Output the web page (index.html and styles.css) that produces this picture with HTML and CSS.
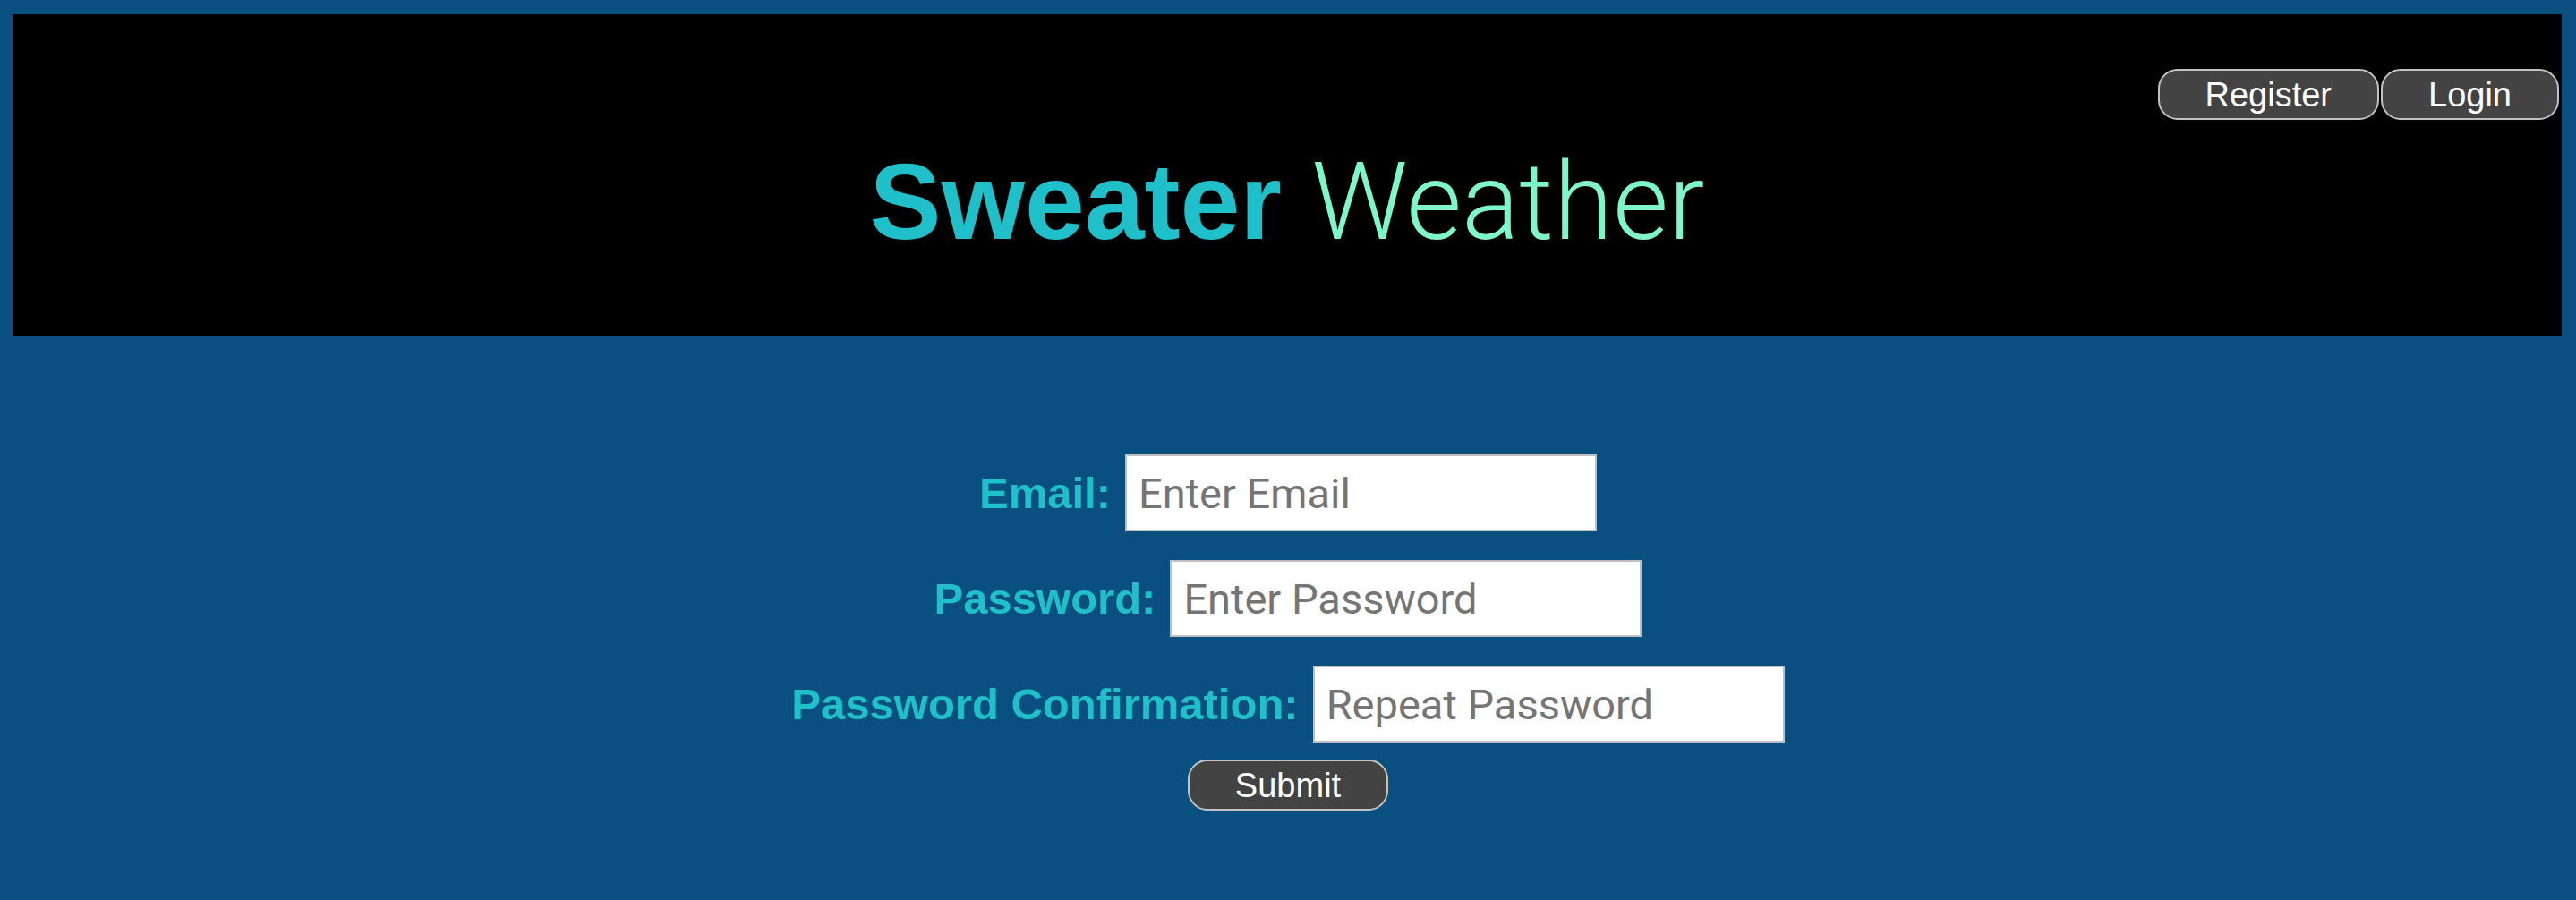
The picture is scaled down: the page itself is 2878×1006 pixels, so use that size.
FILE: index.html
```html
<!DOCTYPE html>
<html lang="en">
<head>
<meta charset="utf-8">
<title>Sweater Weather</title>
<link rel="stylesheet" href="styles.css">
</head>
<body>
  <header class="masthead">
    <nav class="auth-nav">
      <button class="pill-btn" type="button">Register</button>
      <button class="pill-btn" type="button">Login</button>
    </nav>
    <h1 class="title"><span class="title-bold">Sweater</span> <span class="title-light">Weather</span></h1>
  </header>
  <main class="register">
    <form class="register-form">
      <div class="row">
        <label class="field-label" for="email">Email:</label>
        <input class="field-input" id="email" type="text" placeholder="Enter Email">
      </div>
      <div class="row">
        <label class="field-label" for="password">Password:</label>
        <input class="field-input" id="password" type="password" placeholder="Enter Password">
      </div>
      <div class="row">
        <label class="field-label" for="confirm">Password Confirmation:</label>
        <input class="field-input" id="confirm" type="password" placeholder="Repeat Password">
      </div>
      <div class="row submit-row">
        <button class="pill-btn" type="submit">Submit</button>
      </div>
    </form>
  </main>
</body>
</html>
```
FILE: styles.css
```css
html, body {
  margin: 0;
  padding: 0;
}
body {
  background: #095081;
  min-height: 1006px;
  font-family: "Liberation Sans", Arial, sans-serif;
}
.masthead {
  margin: 16px 16px 0 14px;
  background: #000;
  height: 360px;
  box-sizing: border-box;
  padding-top: 61px;
  display: flex;
  flex-direction: column;
}
.auth-nav {
  display: flex;
  justify-content: flex-end;
  gap: 2px;
  padding-right: 3px;
}
.pill-btn {
  height: 57px;
  box-sizing: border-box;
  padding: 0 51px;
  background: #434343;
  color: #fff;
  border: 2px solid #c2c2c2;
  border-radius: 22px;
  font-family: "Liberation Sans", Arial, sans-serif;
  font-size: 38px;
  line-height: 1;
  cursor: pointer;
}
.title {
  margin: 22px 0 0;
  text-align: center;
  font-size: 120px;
  line-height: 138px;
  font-weight: normal;
}
.title-bold {
  font-family: "Liberation Sans", Arial, sans-serif;
  font-weight: 700;
  color: #1fc0c9;
}
.title-light {
  font-family: Roboto, "Liberation Sans", sans-serif;
  font-weight: 300;
  color: #7ff6c9;
}
.register {
  padding-top: 132px;
}
.register-form {
  display: flex;
  flex-direction: column;
  align-items: center;
  gap: 32px;
}
.row {
  display: flex;
  align-items: center;
  gap: 16px;
}
.field-label {
  font-family: "Liberation Sans", Arial, sans-serif;
  font-weight: 700;
  font-size: 49px;
  color: #1fc0c9;
}
.field-input {
  width: 527px;
  height: 86px;
  box-sizing: border-box;
  margin: 0;
  padding: 0 13px;
  border: 2px solid #c0c0c0;
  background: #fff;
  font-family: Roboto, "Liberation Sans", sans-serif;
  font-size: 47px;
  color: #222;
  outline: none;
}
.field-input::placeholder {
  color: #757575;
}
.submit-row {
  margin-top: -13px;
}
```
